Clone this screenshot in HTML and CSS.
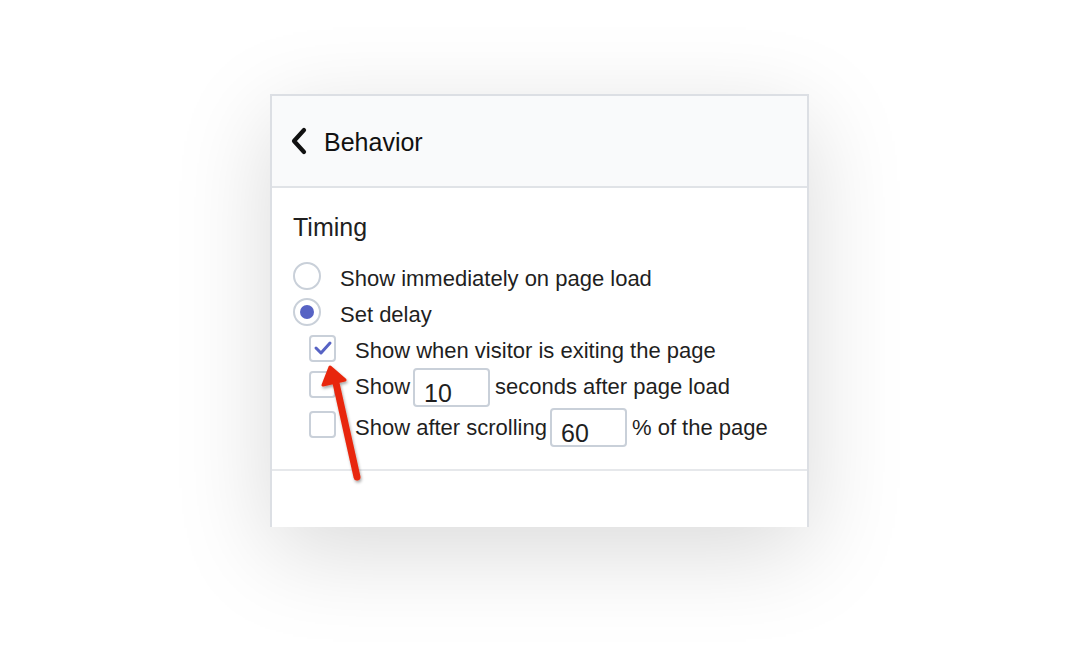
FILE: index.html
```html
<!DOCTYPE html>
<html lang="en">
<head>
    <meta charset="UTF-8">
    <meta name="viewport" content="width=device-width, initial-scale=1.0">
    <title>Behavior</title>
    <link rel="stylesheet" href="styles.css">
</head>
<body>
    <div class="panel">
        <div class="panel-header">
            <svg class="back" width="18" height="28" viewBox="0 0 18 28">
                <path d="M14 3 L4 14 L14 25" fill="none" stroke="#111" stroke-width="4.2" stroke-linecap="round" stroke-linejoin="round"/>
            </svg>
            <span class="title">Behavior</span>
        </div>

        <div class="section">
            <h2>Timing</h2>
            <div class="option">
                <span class="radio"></span>
                <span>Show immediately on page load</span>
            </div>
            <div class="option">
                <span class="radio checked"></span>
                <span>Set delay</span>
            </div>
            <div class="sub-options">
                <div class="option">
                    <span class="checkbox checked">
                        <svg width="20" height="16" viewBox="0 0 20 16">
                            <path d="M3 8 L8 13 L17 3" fill="none" stroke="#5763c4" stroke-width="3" stroke-linecap="round" stroke-linejoin="round"/>
                        </svg>
                    </span>
                    <span>Show when visitor is exiting the page</span>
                </div>
                <div class="option">
                    <span class="checkbox"></span>
                    <span>Show</span>
                    <span class="field">10</span>
                    <span>seconds after page load</span>
                </div>
                <div class="option">
                    <span class="checkbox"></span>
                    <span>Show after scrolling</span>
                    <span class="field">60</span>
                    <span>% of the page</span>
                </div>
            </div>
        </div>
        <div class="section-empty"></div>

        <svg class="arrow" width="60" height="130" viewBox="0 0 60 130">
            <defs>
                <filter id="shade" x="-50%" y="-20%" width="200%" height="140%">
                    <feDropShadow dx="1" dy="2" stdDeviation="1.5" flood-color="#000" flood-opacity="0.35"/>
                </filter>
            </defs>
            <g filter="url(#shade)">
                <path d="M41 116 L20 22" stroke="#e8280c" stroke-width="7" stroke-linecap="round"/>
                <path d="M14 6 L7 24 L29 19 Z" fill="#e8280c" stroke="#e8280c" stroke-width="3" stroke-linejoin="round"/>
            </g>
        </svg>
    </div>
</body>
</html>
```

FILE: styles.css
```css
html, body {
    height: 660px;
}

body {
    margin: 0;
    background: #fff;
    font-family: "Liberation Sans", Arial, sans-serif;
    color: #1f1f1f;
}

.panel {
    position: relative;
    width: 535px;
    height: 431px;
    margin: 94px 0 0 270px;
    border: 2px solid #dcdfe4;
    border-bottom: none;
    background: #fff;
    box-shadow: 0 24px 90px rgba(0, 0, 0, 0.15);
}

.panel-header {
    display: flex;
    align-items: center;
    height: 90px;
    padding-left: 18px;
    background: #f9fafb;
    border-bottom: 2px solid #e0e3e7;
}

.back {
    margin-right: 16px;
}

.title {
    font-size: 25px;
    color: #111;
    position: relative;
    top: 1px;
}

.section {
    padding: 24px 21px 22px;
    border-bottom: 2px solid #e6e8eb;
}

h2 {
    margin: 0 0 19px;
    font-size: 25px;
    font-weight: normal;
    line-height: 30px;
}

.option {
    display: flex;
    align-items: center;
    height: 36px;
    font-size: 22px;
}

.radio {
    flex: none;
    width: 28px;
    height: 28px;
    margin-right: 19px;
    border: 2px solid #c9d0d9;
    border-radius: 50%;
    box-sizing: border-box;
    position: relative;
    top: -3px;
}

.radio.checked::after {
    content: '';
    position: absolute;
    left: 5px;
    top: 5px;
    width: 14px;
    height: 14px;
    border-radius: 50%;
    background: #5763c4;
}

.sub-options {
    padding-left: 16px;
}

.checkbox {
    flex: none;
    display: flex;
    align-items: center;
    justify-content: center;
    width: 27px;
    height: 27px;
    margin-right: 19px;
    border: 2px solid #c9d0d9;
    border-radius: 4px;
    box-sizing: border-box;
    position: relative;
    top: -3px;
}

.field {
    display: inline-block;
    width: 77px;
    height: 39px;
    margin: 0 5px 0 3px;
    padding: 8px 0 0 9px;
    box-sizing: border-box;
    border: 2px solid #c9d0d9;
    border-radius: 4px;
    font-size: 25px;
    line-height: 30px;
}

.option:last-child {
    height: 39px;
    margin-top: 3px;
}

.section-empty {
    height: 55px;
}

.arrow {
    position: absolute;
    left: 44px;
    top: 265px;
}
```
